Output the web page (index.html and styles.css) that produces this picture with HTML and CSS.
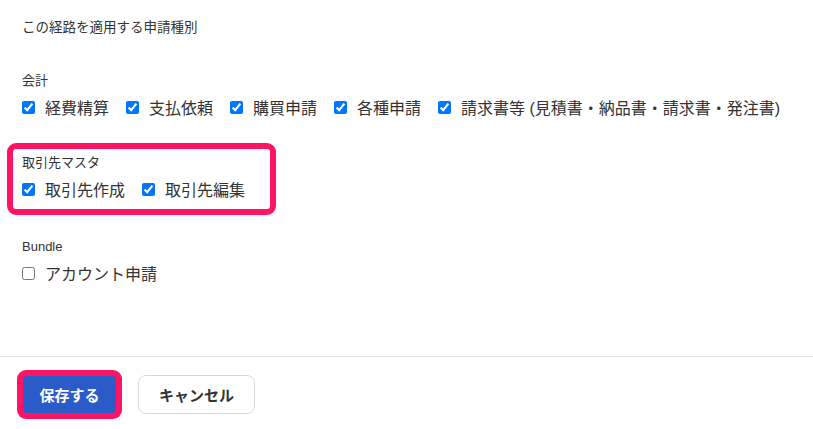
FILE: index.html
```html
<!DOCTYPE html>
<html lang="ja">
<head>
    <meta charset="UTF-8">
    <title>申請種別</title>
    <link rel="stylesheet" href="styles.css">
</head>
<body>
<!-- 申請種別の設定 -->
<form class="route-form">
    <div class="route-body">
        <p class="form-title">この経路を適用する申請種別</p>

        <div class="group">
            <p class="group-name">会計</p>
            <div class="check-row">
                <label class="check"><input type="checkbox" checked>経費精算</label>
                <label class="check"><input type="checkbox" checked>支払依頼</label>
                <label class="check"><input type="checkbox" checked>購買申請</label>
                <label class="check"><input type="checkbox" checked>各種申請</label>
                <label class="check"><input type="checkbox" checked>請求書等 (見積書・納品書・請求書・発注書)</label>
            </div>
        </div>

        <div class="group marked">
            <p class="group-name">取引先マスタ</p>
            <div class="check-row">
                <label class="check"><input type="checkbox" checked>取引先作成</label>
                <label class="check"><input type="checkbox" checked>取引先編集</label>
            </div>
        </div>

        <div class="group">
            <p class="group-name">Bundle</p>
            <div class="check-row">
                <label class="check"><input type="checkbox">アカウント申請</label>
            </div>
        </div>
    </div>

    <!-- 操作ボタン -->
    <div class="route-footer">
        <span class="marked-wrap"><button type="button" class="btn btn-primary">保存する</button></span>
        <button type="button" class="btn btn-default">キャンセル</button>
    </div>
</form>
</body>
</html>
```

FILE: styles.css
```css
body{
    margin: 0;
    background: #fff;
    color: #333;
    font-family: "Liberation Sans", "Noto Sans CJK JP", sans-serif;
}
p{
    margin: 0;
}
.route-body{
    height: 357px;
    box-sizing: border-box;
    padding-top: 18px;
    border-bottom: 1px solid #e6e6e6;
}
.form-title{
    padding-left: 22px;
    font-size: 13.5px;
    line-height: 20px;
}
.group{
    width: fit-content;
    margin: 12px 0 0 7px;
    padding: 4px 25px 8px 9px;
    border: 6px solid transparent;
    border-radius: 9px;
}
.form-title + .group{
    margin-top: 23px;
}
/* 強調表示の枠 */
.group.marked{
    margin-top: 10px;
    border-color: #ff1464;
}
.group-name{
    font-size: 13px;
    line-height: 20px;
}
.check-row{
    display: flex;
    gap: 17px;
    margin-top: 4px;
}
.check{
    display: flex;
    align-items: center;
    gap: 10px;
    height: 24px;
    font-size: 16px;
    white-space: nowrap;
}
.check input{
    margin: 0;
    width: 13px;
    height: 13px;
}
.route-footer{
    display: flex;
    align-items: center;
    gap: 16px;
    padding: 13px 0 0 17px;
}
.marked-wrap{
    display: flex;
    padding: 6px;
    border-radius: 9px;
    background: #ff1464;
}
.btn{
    font-family: inherit;
    font-size: 15px;
    font-weight: bold;
    cursor: pointer;
}
.btn-primary{
    width: 93px;
    height: 37px;
    border: none;
    border-radius: 4px;
    background: #2b5bc9;
    color: #fff;
}
.btn-default{
    width: 117px;
    height: 39px;
    border: 1px solid #d9d9d9;
    border-radius: 8px;
    background: #fff;
    color: #333;
}
```
